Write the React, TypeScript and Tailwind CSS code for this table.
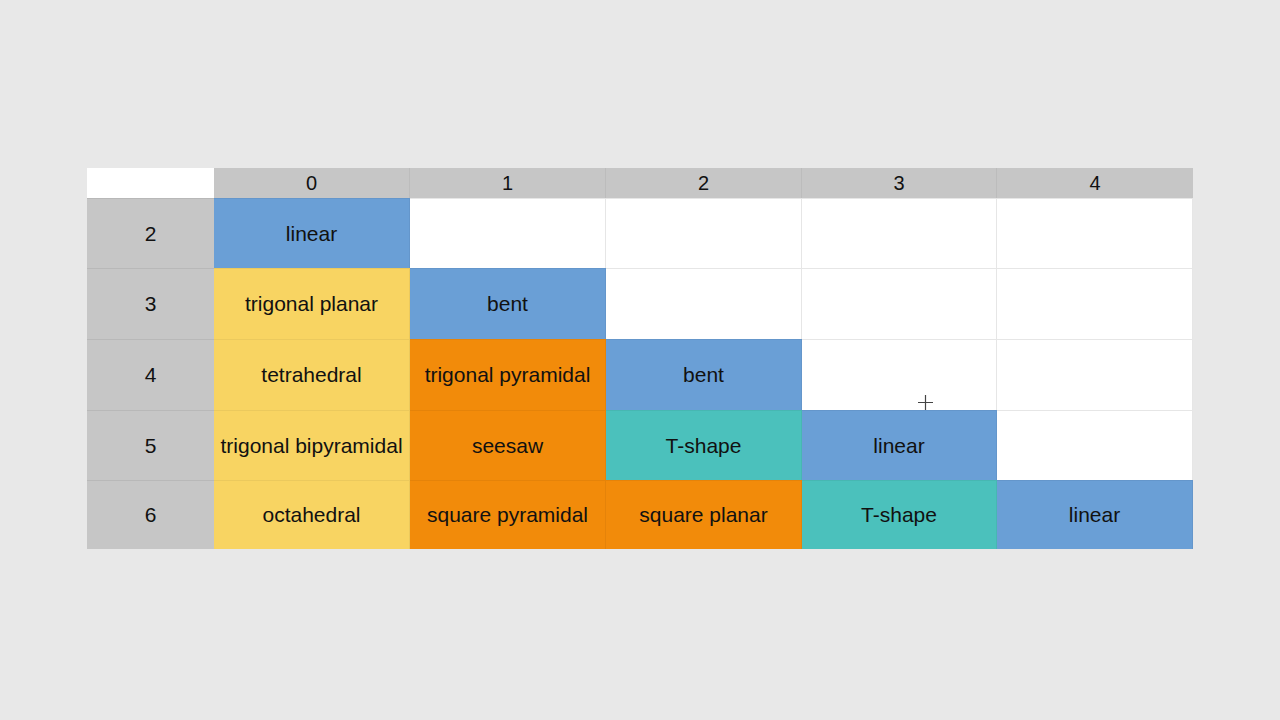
import React from 'react';

type Cell = { label: string; color: string } | null;

const BLUE = 'bg-[#6a9fd6]';
const YELLOW = 'bg-[#f8d462]';
const ORANGE = 'bg-[#f28b0a]';
const TEAL = 'bg-[#4bc1bc]';

const rows: { n: number; h: string; cells: Cell[] }[] = [
  { n: 2, h: 'h-[70px]', cells: [{ label: 'linear', color: BLUE }, null, null, null, null] },
  { n: 3, h: 'h-[71px]', cells: [{ label: 'trigonal planar', color: YELLOW }, { label: 'bent', color: BLUE }, null, null, null] },
  { n: 4, h: 'h-[71px]', cells: [{ label: 'tetrahedral', color: YELLOW }, { label: 'trigonal pyramidal', color: ORANGE }, { label: 'bent', color: BLUE }, null, null] },
  { n: 5, h: 'h-[70px]', cells: [{ label: 'trigonal bipyramidal', color: YELLOW }, { label: 'seesaw', color: ORANGE }, { label: 'T-shape', color: TEAL }, { label: 'linear', color: BLUE }, null] },
  { n: 6, h: 'h-[69px]', cells: [{ label: 'octahedral', color: YELLOW }, { label: 'square pyramidal', color: ORANGE }, { label: 'square planar', color: ORANGE }, { label: 'T-shape', color: TEAL }, { label: 'linear', color: BLUE }] },
];

const colWidths = ['w-[196px]', 'w-[196px]', 'w-[196px]', 'w-[195px]', 'w-[196px]'];

export default function App() {
  return (
    <div className="w-[1280px] h-[720px] bg-[#e8e8e8] pt-[168px] pl-[87px] text-[21px] text-[#111] font-['Liberation_Sans',Arial,sans-serif] relative">
      <div className="flex flex-col w-[1106px]">
        <div className="flex h-[30px] text-[20px]">
          <div className="w-[127px] bg-white" />
          {colWidths.map((w, i) => (
            <div key={i} className={`${w} bg-[#c6c6c6] border-r border-[#bcbcbc] last:border-r-0 flex items-center justify-center`}>
              {i}
            </div>
          ))}
        </div>
        {rows.map((row) => (
          <div key={row.n} className={`flex ${row.h}`}>
            <div className="w-[127px] bg-[#c6c6c6] border-t border-[#b8b8b8] flex items-center justify-center">
              {row.n}
            </div>
            {row.cells.map((c, i) => (
              <div
                key={i}
                className={`${colWidths[i]} flex items-center justify-center border-t border-r ${
                  c ? `${c.color} border-black/5` : 'bg-white border-[#e6e6e6]'
                }`}
              >
                {c?.label}
              </div>
            ))}
          </div>
        ))}
      </div>
      <svg className="absolute left-[918px] top-[395px]" width="15" height="15" viewBox="0 0 15 15">
        <path d="M7.5 0v15M0 7.5h15" stroke="#444" strokeWidth="1.2" />
      </svg>
    </div>
  );
}
